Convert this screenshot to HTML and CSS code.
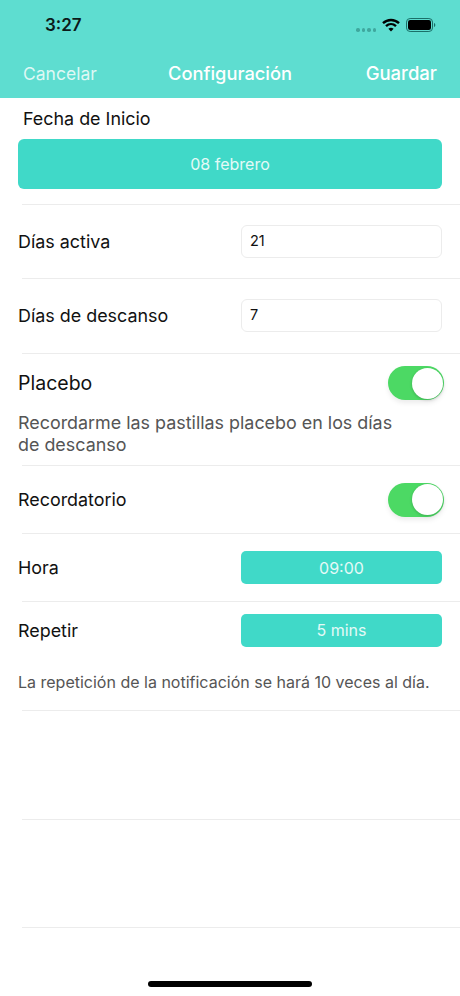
FILE: index.html
```html
<!DOCTYPE html>
<html lang="es">
<head>
<meta charset="utf-8">
<title>Configuración</title>
<link rel="stylesheet" href="styles.css">
</head>
<body>
<div class="screen">
  <header class="top">
    <div class="status">
      <span class="time">3:27</span>
      <div class="status-icons">
        <span class="signal"><i></i><i></i><i></i><i></i></span>
        <svg class="wifi" width="18" height="14" viewBox="0 0 18 14"><path d="M1 5.2C5.6 .9 12.4 .9 17 5.2" fill="none" stroke="#000" stroke-width="2.400"/><path d="M4 8.1C6.9 5.4 11.100 5.4 14 8.1" fill="none" stroke="#000" stroke-width="2.400"/><path d="M9 13.6 6.400 10.700C8 9.300 10 9.300 11.600 10.700Z" fill="#000"/></svg>
        <svg class="battery" width="30" height="14" viewBox="0 0 30 14"><rect x=".5" y=".5" width="26" height="13" rx="3.6" fill="none" stroke="#1a6f68" stroke-width="1"/><rect x="2" y="2" width="23" height="10" rx="2.2" fill="#000"/><path d="M28 5v4c.8-.3 1.300-1.100 1.300-2S28.800 5.300 28 5Z" fill="#1a6f68"/></svg>
      </div>
    </div>
    <nav class="nav">
      <span class="nav-cancel">Cancelar</span>
      <span class="nav-title">Configuración</span>
      <span class="nav-save">Guardar</span>
    </nav>
  </header>

  <main>
    <section class="start">
      <div class="start-label">Fecha de Inicio</div>
      <div class="btn btn-wide">08 febrero</div>
    </section>
    <div class="sep"></div>

    <section class="row row-input">
      <span class="label">Días activa</span>
      <span class="field">21</span>
    </section>
    <div class="sep"></div>

    <section class="row row-input row-input-tall">
      <span class="label">Días de descanso</span>
      <span class="field">7</span>
    </section>
    <div class="sep"></div>

    <section class="placebo">
      <div class="placebo-head">
        <span class="label label-big">Placebo</span>
        <span class="switch"><i></i></span>
      </div>
      <p class="hint hint-big">Recordarme las pastillas placebo en los días de descanso</p>
    </section>
    <div class="sep"></div>

    <section class="row row-switch">
      <span class="label">Recordatorio</span>
      <span class="switch"><i></i></span>
    </section>
    <div class="sep"></div>

    <section class="row row-hour">
      <span class="label">Hora</span>
      <span class="btn btn-small">09:00</span>
    </section>
    <div class="sep"></div>

    <section class="repeat">
      <div class="repeat-head">
        <span class="label">Repetir</span>
        <span class="btn btn-small">5 mins</span>
      </div>
      <p class="hint">La repetición de la notificación se hará 10 veces al día.</p>
    </section>
    <div class="sep"></div>

    <div class="blank"></div>
    <div class="sep"></div>
    <div class="blank"></div>
    <div class="sep"></div>
  </main>

  <div class="home"></div>
</div>
</body>
</html>
```
FILE: styles.css
```css
* { box-sizing: border-box; }
html, body { margin: 0; padding: 0; background: #fff; }
body { font-family: Inter, "Noto Sans", sans-serif; color: #111; }
.screen { width: 460px; height: 996px; overflow: hidden; position: relative; background: #fff; }

.top { height: 98px; background: #5eddd0; }
.status { height: 50px; display: flex; align-items: center; justify-content: space-between; padding: 0 24px 0 45px; }
.time { font-size: 17px; font-weight: 600; color: #0c1a19; }
.status-icons { display: flex; align-items: center; gap: 6px; }
.signal { display: flex; gap: 2px; margin-top: 10px; }
.signal i { width: 3.500px; height: 3.500px; border-radius: 50%; background: #3fa89e; }
.wifi, .battery { display: block; }
.nav { height: 48px; display: flex; align-items: center; justify-content: space-between; padding: 0 23px 2px; color: #fff; }
.nav-cancel { color: #dff8f5; font-size: 17.500px; font-weight: 400; width: 100px; }
.nav-title { font-size: 18.300px; font-weight: 500; }
.nav-save { font-size: 18.500px; font-weight: 500; width: 100px; text-align: right; }

.sep { height: 1px; margin-left: 22px; background: #ececec; }

.start { height: 106px; padding: 0 18px; }
.start-label { height: 41px; padding: 10px 0 0 5px; font-size: 17.900px; line-height: 22px; }
.btn { display: flex; align-items: center; justify-content: center; background: #40d9c8; color: #e4faf7; border-radius: 5px; font-size: 16px; }
.btn-wide { height: 50px; border-radius: 6px; }
.btn-small { width: 201px; height: 33px; }

.row { display: flex; align-items: center; justify-content: space-between; padding: 0 18px; }
.row-input { height: 73px; }
.row-input-tall { height: 74px; }
.row-switch { height: 67px; }
.row-hour { height: 67px; }
.label { font-size: 17.900px; line-height: 22px; }
.label-big { font-size: 19.500px; }
.field { width: 201px; height: 33px; margin-top: -1px; padding: 0 8px 2px; display: flex; align-items: center; border: 1px solid #ececec; border-radius: 6px; font-size: 14.500px; }

.switch { position: relative; width: 56px; height: 34px; margin-right: -2px; border-radius: 17px; background: #4cd964; box-shadow: 0 3px 5px rgba(0,0,0,.08); display: block; }
.switch i { position: absolute; right: 1.500px; top: 1.500px; width: 31px; height: 31px; border-radius: 50%; background: #fff; box-shadow: 0 1px 3px rgba(0,0,0,.2); }

.placebo { height: 111px; padding: 0 18px; }
.placebo-head { height: 58px; display: flex; align-items: center; justify-content: space-between; }
.hint { margin: 0; color: #555; font-size: 16px; line-height: 22px; }
.hint-big { width: 385px; font-size: 17.900px; line-height: 22px; }

.repeat { height: 108px; padding: 0 18px; }
.repeat-head { height: 58px; display: flex; align-items: center; justify-content: space-between; }
.repeat-head .btn { margin-top: -2px; }
.repeat .hint { margin-top: 11px; }

.blank { height: 107.500px; }
.home { position: absolute; left: 148px; bottom: 9px; width: 164px; height: 6px; border-radius: 3px; background: #000; }
```
